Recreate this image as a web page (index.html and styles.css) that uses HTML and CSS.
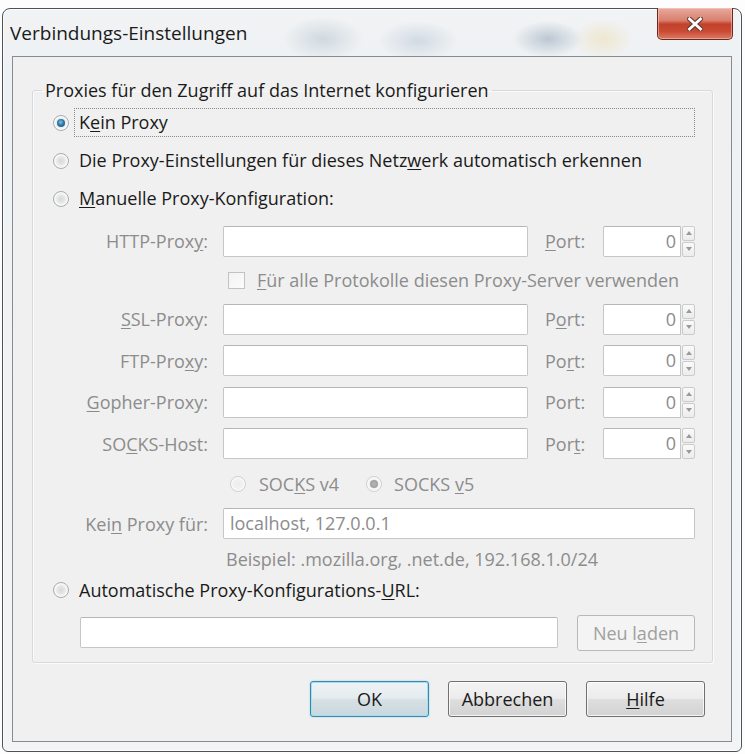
FILE: index.html
```html
<!DOCTYPE html>
<html lang="de">
<head>
<meta charset="utf-8">
<title>Verbindungs-Einstellungen</title>
<link rel="stylesheet" href="styles.css">
</head>
<body>
<div class="window">
  <div class="titlebar">
    <span class="title">Verbindungs-Einstellungen</span>
    <div class="close">
      <svg width="16" height="14" viewBox="0 0 16 14" aria-hidden="true">
        <path d="M2.5 2 L13.5 12 M13.5 2 L2.5 12" stroke="#5e3a33" stroke-width="5" stroke-linecap="square" fill="none"/>
        <path d="M2.5 2 L13.5 12 M13.5 2 L2.5 12" stroke="#ffffff" stroke-width="2.8" stroke-linecap="square" fill="none"/>
      </svg>
    </div>
  </div>
  <div class="client">
    <fieldset class="group">
      <legend>Proxies für den Zugriff auf das Internet konfigurieren</legend>
      <div class="opt"><span class="radio checked"></span><span class="optlabel focus">K<u>e</u>in Proxy</span></div>
      <div class="opt"><span class="radio"></span><span class="optlabel">Die Proxy-Einstellungen für dieses Netz<u>w</u>erk automatisch erkennen</span></div>
      <div class="opt"><span class="radio"></span><span class="optlabel"><u>M</u>anuelle Proxy-Konfiguration:</span></div>

      <div class="manual">
        <span class="lbl">HTTP-Prox<u>y</u>:</span>
        <span class="field"></span>
        <span class="plbl"><u>P</u>ort:</span>
        <span class="port"><span class="pbox">0</span><span class="spin"><span class="up"></span><span class="down"></span></span></span>

        <div class="checkrow"><span class="checkbox"></span><span class="dis"><u>F</u>ür alle Protokolle diesen Proxy-Server verwenden</span></div>

        <span class="lbl"><u>S</u>SL-Proxy:</span>
        <span class="field"></span>
        <span class="plbl">P<u>o</u>rt:</span>
        <span class="port"><span class="pbox">0</span><span class="spin"><span class="up"></span><span class="down"></span></span></span>

        <span class="lbl">FTP-Pro<u>x</u>y:</span>
        <span class="field"></span>
        <span class="plbl">Po<u>r</u>t:</span>
        <span class="port"><span class="pbox">0</span><span class="spin"><span class="up"></span><span class="down"></span></span></span>

        <span class="lbl"><u>G</u>opher-Proxy:</span>
        <span class="field"></span>
        <span class="plbl">Port:</span>
        <span class="port"><span class="pbox">0</span><span class="spin"><span class="up"></span><span class="down"></span></span></span>

        <span class="lbl">SO<u>C</u>KS-Host:</span>
        <span class="field"></span>
        <span class="plbl">Por<u>t</u>:</span>
        <span class="port"><span class="pbox">0</span><span class="spin"><span class="up"></span><span class="down"></span></span></span>

        <div class="socksrow">
          <span class="radio disabled"></span><span class="dis socks4">SOC<u>K</u>S v4</span>
          <span class="radio disabled checked"></span><span class="dis socks5">SOCKS <u>v</u>5</span>
        </div>

        <span class="lbl">Kei<u>n</u> Proxy für:</span>
        <span class="field wide">localhost, 127.0.0.1</span>

        <div class="example">Beispiel: .mozilla.org, .net.de, 192.168.1.0/24</div>
      </div>

      <div class="opt auto"><span class="radio"></span><span class="optlabel">Automatische Proxy-Konfigurations-<u>U</u>RL:</span></div>
      <div class="urlrow">
        <span class="field url"></span>
        <span class="btn disabled">Neu l<u>a</u>den</span>
      </div>
    </fieldset>

    <div class="buttons">
      <span class="btn default">OK</span>
      <span class="btn">Abbrechen</span>
      <span class="btn"><u>H</u>ilfe</span>
    </div>
  </div>
</div>
</body>
</html>
```

FILE: styles.css
```css
* { box-sizing: border-box; }
html, body { margin: 0; padding: 0; }
body {
  width: 745px;
  height: 754px;
  overflow: hidden;
  background: #fdfdfd;
  font-family: "Open Sans", "Noto Sans", sans-serif;
  font-size: 18px;
  color: #1a1a1a;
}
u { text-underline-offset: 2px; text-decoration-thickness: 1px; }

.window {
  margin: 8px 0 0 2px;
  width: 740px;
  height: 744px;
  border: 1px solid #4d5256;
  border-radius: 8px 8px 6px 6px;
  display: flex;
  flex-direction: column;
  background:
    radial-gradient(ellipse 40px 22px at 320px 30px, rgba(150,170,185,0.35), transparent),
    radial-gradient(ellipse 40px 20px at 415px 32px, rgba(120,150,175,0.25), transparent),
    radial-gradient(ellipse 35px 18px at 545px 30px, rgba(90,120,150,0.35), transparent),
    radial-gradient(ellipse 30px 20px at 600px 30px, rgba(235,210,140,0.35), transparent),
    linear-gradient(#f1f3f5, #eef1f3 60px, #f3f4f5 100%);
  box-shadow: inset 0 0 0 1px rgba(255,255,255,0.7);
}

.titlebar {
  height: 47px;
  flex: none;
  display: flex;
  justify-content: space-between;
  align-items: flex-start;
}
.title {
  margin: 13px 0 0 7px;
  line-height: 22px;
  font-size: 19px;
  color: #1a1a1a;
}
.close {
  width: 76px;
  height: 32px;
  margin: -1px 8px 0 0;
  border: 1px solid #6a2a20;
  border-top: none;
  border-radius: 0 0 5px 5px;
  background: linear-gradient(#e7aa9e 0%, #d9806e 40%, #c3412b 52%, #c94a33 75%, #dc7a62 100%);
  box-shadow: inset 0 0 0 1px rgba(255,220,210,0.45);
  display: flex;
  align-items: center;
  justify-content: center;
}

.client {
  flex: 1;
  margin: 0 9px 9px 9px;
  border: 1px solid #858c92;
  background: #f0f0f0;
  padding: 22px 18px 0 19px;
  display: flex;
  flex-direction: column;
}

.group {
  margin: 0;
  min-width: 0;
  padding: 7px 17px 11px 9px;
  border: 1px solid #d5dadd;
  border-radius: 3px;
  box-shadow: inset 1px 1px 0 #fafafa, 1px 1px 0 #fafafa;
}
.group legend {
  padding: 0 3px;
  line-height: 22px;
  color: #1a1a1a;
}

.opt {
  display: flex;
  align-items: center;
  height: 29px;
  margin-bottom: 9px;
  padding-left: 11px;
}
.optlabel {
  margin-left: 5px;
  padding: 0 4px;
  height: 29px;
  line-height: 27px;
  border: 1px solid transparent;
  white-space: nowrap;
}
.optlabel.focus {
  flex: 1;
  border: 1px dotted #8a8a8a;
}
.opt.auto { margin-top: 8px; margin-bottom: 10px; }

.radio {
  width: 16px;
  height: 16px;
  flex: none;
  border-radius: 50%;
  border: 1px solid #a9abad;
  background: radial-gradient(circle, #d6d8da 0, #e4e5e6 35%, #f6f6f6 62%, #ececec 100%);
  box-shadow: inset 0 0 0 1px #fafafa;
  position: relative;
}
.radio.checked::after {
  content: "";
  position: absolute;
  left: 3px; top: 3px;
  width: 8px; height: 8px;
  border-radius: 50%;
  background: radial-gradient(circle at 45% 40%, #7fc4e8 0, #2d7aa8 45%, #1b4c6c 100%);
}
.radio.disabled {
  border-color: #cfd1d3;
  background: radial-gradient(circle, #ececec 0, #f2f2f2 50%, #f7f7f7 100%);
}
.radio.disabled.checked::after {
  background: radial-gradient(circle, #b8b8b8 0, #a2a2a2 60%, #9a9a9a 100%);
}

.dis { color: #8c8c8c; }

.manual {
  display: grid;
  grid-template-columns: 155px 305px 45px 92px;
  column-gap: 15px;
  row-gap: 10.5px;
  margin: 12.5px 0 0 11px;
  align-items: center;
}
.lbl {
  text-align: right;
  color: #8c8c8c;
  white-space: nowrap;
}
.plbl {
  color: #8c8c8c;
  padding-left: 2px;
  white-space: nowrap;
}
.field {
  height: 31px;
  background: #ffffff;
  border: 1px solid #c4c6c8;
  border-top-color: #b4b7ba;
  border-radius: 2px;
  color: #8c8c8c;
  line-height: 29px;
  padding-left: 6px;
}
.field.wide { grid-column: 2 / 5; }

.port {
  display: flex;
  height: 31px;
}
.pbox {
  flex: 1;
  background: #ffffff;
  border: 1px solid #c4c6c8;
  border-top-color: #b4b7ba;
  border-radius: 2px 0 0 2px;
  text-align: right;
  padding-right: 4px;
  line-height: 29px;
  color: #8c8c8c;
}
.spin {
  width: 14px;
  display: flex;
  flex-direction: column;
  gap: 1px;
  padding: 0 0 0 1px;
}
.spin span {
  flex: 1;
  border: 1px solid #c9cbcd;
  border-radius: 2px;
  background: linear-gradient(#fafafa, #ececec);
  display: flex;
  align-items: center;
  justify-content: center;
}
.spin .up::after {
  content: "";
  border-left: 3px solid transparent;
  border-right: 3px solid transparent;
  border-bottom: 4px solid #9a9a9a;
}
.spin .down::after {
  content: "";
  border-left: 3px solid transparent;
  border-right: 3px solid transparent;
  border-top: 4px solid #9a9a9a;
}

.checkrow {
  grid-column: 2 / 5;
  height: 26px;
  display: flex;
  align-items: center;
  padding-left: 5px;
  white-space: nowrap;
}
.checkbox {
  width: 17px;
  height: 17px;
  flex: none;
  border: 1px solid #c1c3c5;
  background: linear-gradient(135deg, #f3f3f3, #fbfbfb);
  margin-right: 12px;
}

.socksrow {
  grid-column: 2 / 5;
  height: 28px;
  display: flex;
  align-items: center;
  padding-left: 7px;
  white-space: nowrap;
}
.socks4 { margin-left: 13px; margin-right: 27px; }
.socks5 { margin-left: 12px; }

.example {
  grid-column: 2 / 5;
  height: 18px;
  line-height: 18px;
  padding-left: 3px;
  color: #8c8c8c;
  white-space: nowrap;
}

.urlrow {
  display: flex;
  align-items: center;
  height: 36px;
  padding-left: 38px;
  gap: 19px;
}
.field.url { width: 478px; }

.btn {
  height: 36px;
  border: 1px solid #707070;
  border-radius: 3px;
  background: linear-gradient(#f4f4f4 0%, #ececec 48%, #dedede 52%, #d2d2d2 100%);
  box-shadow: inset 0 0 0 1px rgba(255,255,255,0.75);
  display: flex;
  align-items: center;
  justify-content: center;
  color: #1a1a1a;
  white-space: nowrap;
}
.btn.disabled {
  width: 118px;
  border-color: #b5b9bc;
  background: #f4f4f4;
  box-shadow: none;
  color: #a0a0a0;
}
.btn.default {
  border-color: #3f86a8;
  background: linear-gradient(#eef3f5 0%, #e4ebee 48%, #d6e0e5 52%, #cad7de 100%);
  box-shadow: inset 0 0 0 1px #9fe0f5, 0 0 2px rgba(80,190,230,0.6);
}

.buttons {
  display: flex;
  justify-content: flex-end;
  margin-top: 18px;
  padding-right: 8px;
}
.buttons .btn { width: 119px; }
.buttons .btn + .btn { margin-left: 19px; }
```
